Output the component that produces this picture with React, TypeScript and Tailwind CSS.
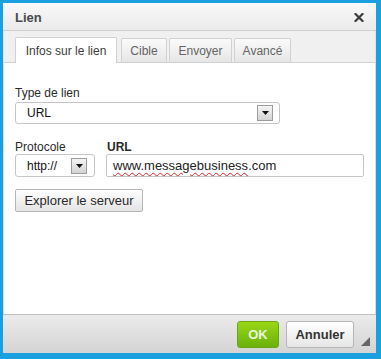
import React from "react";

function Arrow() {
  return (
    <div className="w-[16px] h-[16px] border border-[#9c9c9c] bg-gradient-to-b from-[#f4f4f4] to-[#d4d4d4] flex items-center justify-center">
      <svg width="7" height="4" viewBox="0 0 7 4">
        <polygon points="0,0 7,0 3.5,4" fill="#111" />
      </svg>
    </div>
  );
}

export default function App() {
  return (
    <div className="w-[381px] h-[359px] bg-[#1a9fdf] pt-[3px] pl-[3px] font-['Liberation_Sans',Arial,sans-serif] text-[12px]">
      <div className="w-[373px] h-[350px] flex flex-col bg-[#f0f0f0]">
        {/* title */}
        <div className="h-[28px] shrink-0 flex items-center justify-between pl-[12px] pr-[12px] bg-gradient-to-b from-[#f8f8f8] to-[#ebebeb] border-b border-[#cfcfcf]">
          <span className="text-[13px] font-bold text-[#4a4a4a] leading-none pt-[1px]">Lien</span>
          <svg width="10" height="9" viewBox="0 0 10 9" className="mt-[1px]">
            <path d="M1.5 1 L8.5 8 M8.5 1 L1.5 8" stroke="#3c3c3c" strokeWidth="2.2" strokeLinecap="square" />
          </svg>
        </div>
        {/* tabs */}
        <div className="h-[32px] shrink-0 flex items-end pl-[11px] border-b border-[#d1d1d1] bg-[#f0f0f0] border-x border-x-[#e2e2e2]">
          <div className="h-[26px] w-[102px] -mb-px bg-white border border-b-0 border-[#d1d1d1] flex items-center justify-center text-[#3c3c3c] rounded-t-[2px]">
            Infos sur le lien
          </div>
          <div className="h-[24px] w-[46px] ml-[4px] bg-gradient-to-b from-[#fafafa] to-[#e6e6e6] border border-b-0 border-[#d1d1d1] flex items-center justify-center text-[#646464] rounded-t-[2px]">
            Cible
          </div>
          <div className="h-[24px] w-[63px] ml-[2px] bg-gradient-to-b from-[#fafafa] to-[#e6e6e6] border border-b-0 border-[#d1d1d1] flex items-center justify-center text-[#646464] rounded-t-[2px]">
            Envoyer
          </div>
          <div className="h-[24px] w-[57px] ml-[2px] bg-gradient-to-b from-[#fafafa] to-[#e6e6e6] border border-b-0 border-[#d1d1d1] flex items-center justify-center text-[#646464] rounded-t-[2px]">
            Avancé
          </div>
        </div>
        {/* content */}
        <div className="flex-1 bg-white border-x border-[#dcdcdc] pl-[11px] pt-[23px] text-[#2a2a2a]">
          <div className="leading-[14px]">Type de lien</div>
          <div className="mt-[2px] w-[265px] h-[22px] border border-[#c6c6c6] rounded-[3px] flex items-center justify-between pl-[11px] pr-[6px] text-[#111]">
            <span>URL</span>
            <Arrow />
          </div>
          <div className="mt-[16px] flex">
            <div className="w-[91px]">
              <div className="leading-[14px]">Protocole</div>
              <div className="w-[80px] h-[23px] border border-[#c6c6c6] rounded-[3px] flex items-center justify-between pl-[11px] pr-[7px] text-[#111]">
                <span>http://</span>
                <Arrow />
              </div>
            </div>
            <div>
              <div className="leading-[14px] font-bold text-[#2a2a2a] pl-[1px]">URL</div>
              <div className="w-[258px] h-[23px] border border-[#c6c6c6] rounded-[2px] flex items-center pl-[6px] text-[13px] text-[#222]">
                <span className="underline decoration-wavy decoration-[#e0242a] decoration-[1px] underline-offset-[2px]">www.messagebusiness</span>
                <span>.com</span>
              </div>
            </div>
          </div>
          <div className="mt-[12px] w-[128px] h-[23px] border border-[#b6b6b6] rounded-[2px] bg-gradient-to-b from-[#ffffff] to-[#e4e4e4] flex items-center justify-center text-[13px] text-[#2a2a2a]">
            Explorer le serveur
          </div>
        </div>
        {/* footer */}
        <div className="relative h-[39px] shrink-0 border-t border-[#bfbfbf] bg-gradient-to-b from-[#ebebeb] to-[#d3d4d3] flex items-start justify-end pt-[6px] pr-[22px] gap-[7px]">
          <div className="w-[42px] h-[27px] rounded-[3px] border border-[#6aa812] bg-gradient-to-b from-[#9ad717] to-[#69b10b] flex items-center justify-center font-bold text-[13px] text-[#eaf6d6]">
            OK
          </div>
          <div className="w-[68px] h-[27px] rounded-[3px] border border-[#b6b6b6] bg-gradient-to-b from-[#ffffff] to-[#e6e6e6] flex items-center justify-center font-bold text-[13px] text-[#333]">
            Annuler
          </div>
          <svg width="9" height="9" viewBox="0 0 9 9" className="absolute right-[6px] bottom-[7px]">
            <polygon points="9,0 9,9 0,9" fill="#666" />
          </svg>
        </div>
      </div>
    </div>
  );
}
